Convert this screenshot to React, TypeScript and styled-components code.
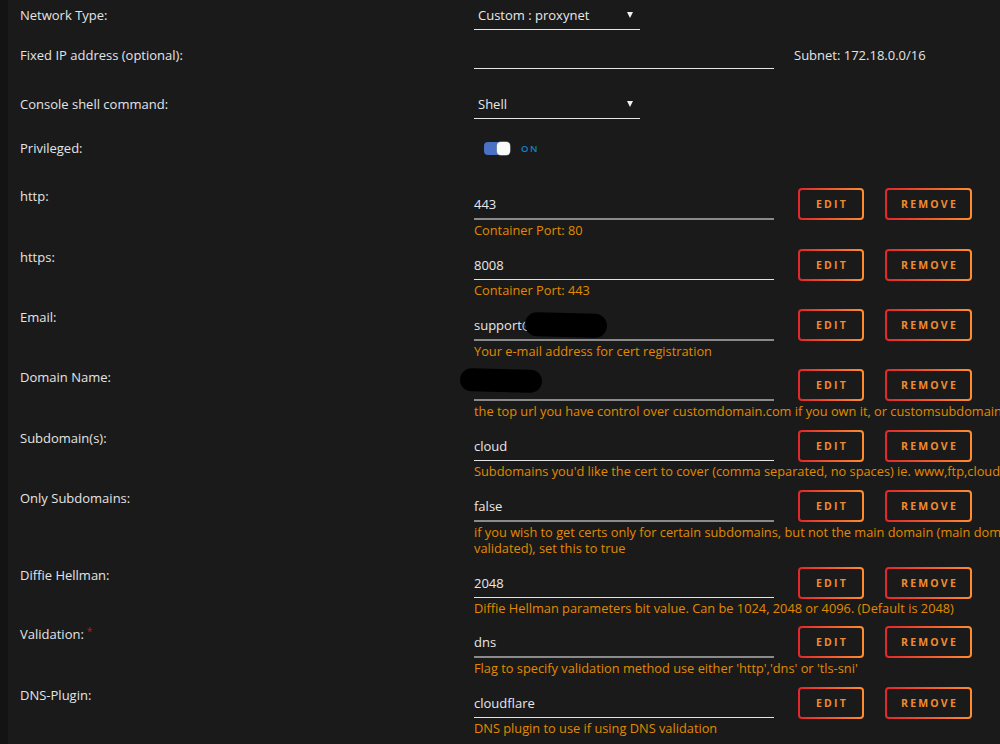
import React from "react";
import styled, { createGlobalStyle } from "styled-components";

const Global = createGlobalStyle`
  html, body { margin: 0; padding: 0; background: #1a1a1a; overflow: hidden; }
  body { font-family: "Open Sans", "Noto Sans", sans-serif; -webkit-font-smoothing: antialiased; }
  * { box-sizing: border-box; }
`;

const Page = styled.div`
  display: flex;
  width: 1000px;
  height: 744px;
  overflow: hidden;
`;

const Strip = styled.div`
  width: 8px;
  flex: none;
  background: #131313;
`;

const Content = styled.div`
  flex: 1;
  min-width: 0;
  padding-left: 12px;
  background: #1a1a1a;
`;

const TopRow = styled.div<{ $top: number; $h: number }>`
  display: grid;
  grid-template-columns: 454px 300px auto;
  align-items: center;
  margin-top: ${(p) => p.$top}px;
  height: ${(p) => p.$h}px;
`;

const PortRow = styled.div<{ $first?: boolean }>`
  display: grid;
  grid-template-columns: 454px 300px auto;
  align-items: start;
  margin-top: ${(p) => (p.$first ? 28 : 0)}px;
  padding-bottom: 8.75px;
`;

const Label = styled.div`
  font-size: 13px;
  line-height: 20px;
  height: 20px;
  color: #e4e4e4;
  white-space: nowrap;
`;

const Req = styled.span`
  position: relative;
  top: -4px;
  color: #d01010;
  font-size: 10px;
  margin-left: 3px;
`;

const Select = styled.div<{ $h: number }>`
  width: 166px;
  height: ${(p) => p.$h}px;
  display: flex;
  align-items: center;
  justify-content: space-between;
  padding: 0 7px 0 4px;
  border-bottom: 1px solid #e6e6e6;
  font-size: 13px;
  color: #e8e8e8;
`;

const Arrow = styled.span`
  width: 0;
  height: 0;
  border-left: 3px solid transparent;
  border-right: 3px solid transparent;
  border-top: 6px solid #f0f0f0;
`;

const PlainInput = styled.div<{ $h: number }>`
  width: 300px;
  height: ${(p) => p.$h}px;
  border-bottom: 1px solid #e6e6e6;
`;

const Subnet = styled.div`
  margin-left: 20px;
  font-size: 13px;
  color: #e4e4e4;
  white-space: nowrap;
`;

const Toggle = styled.div`
  display: flex;
  align-items: center;
  margin-left: 10px;
`;

const Track = styled.div`
  width: 26px;
  height: 13px;
  border-radius: 4px;
  background: #4b71c4;
  display: flex;
  justify-content: flex-end;
`;

const Knob = styled.div`
  width: 13px;
  height: 13px;
  border-radius: 4px;
  background: #fafafa;
  box-shadow: 0 0 0 0.5px #999;
`;

const OnText = styled.span`
  margin-left: 11px;
  font-size: 9.5px;
  font-weight: 600;
  letter-spacing: 1.6px;
  color: #0f84c6;
`;

const FieldCol = styled.div`
  margin-top: 2px;
  min-width: 0;
`;

const InputBox = styled.div<{ $active?: boolean }>`
  position: relative;
  width: 300px;
  height: ${(p) => (p.$active ? 31 : 32)}px;
  margin-bottom: ${(p) => (p.$active ? 1 : 0)}px;
  padding-top: 2px;
  line-height: 28px;
  font-size: 13px;
  color: #e8e8e8;
  border-bottom: ${(p) => (p.$active ? "1px solid #e4e4e4" : "2px solid #8a8a8a")};
`;

const Blob = styled.span<{ $l: number; $t: number; $w: number; $h: number }>`
  position: absolute;
  left: ${(p) => p.$l}px;
  top: ${(p) => p.$t}px;
  width: ${(p) => p.$w}px;
  height: ${(p) => p.$h}px;
  border-radius: 12px;
  background: #000;
  transform: rotate(1.5deg);
`;

const Help = styled.div`
  margin-top: 2px;
  font-size: 12.8px;
  line-height: 16px;
  color: #e08a00;
  white-space: nowrap;
`;

const Buttons = styled.div`
  display: flex;
  gap: 21px;
  margin-top: 2px;
  margin-left: 24px;
`;

const Btn = styled.button<{ $w: number }>`
  width: ${(p) => p.$w}px;
  height: 32px;
  border: 2px solid transparent;
  border-radius: 4px;
  background: linear-gradient(#1a1a1a, #1a1a1a) padding-box,
    linear-gradient(90deg, #e3262b, #ff8d2f) border-box;
  color: #f08a30;
  font-family: "Open Sans", "Noto Sans", sans-serif;
  font-size: 10.5px;
  font-weight: 700;
  letter-spacing: 2.2px;
  padding: 0 0 0 2px;
  cursor: pointer;
`;

type Field = {
  label: string;
  value?: string;
  help: React.ReactNode;
  active?: boolean;
  required?: boolean;
  blob?: { l: number; t: number; w: number; h: number };
};

const fields: Field[] = [
  { label: "http:", value: "443", help: "Container Port: 80" },
  { label: "https:", value: "8008", help: "Container Port: 443", active: true },
  {
    label: "Email:",
    value: "support@",
    help: "Your e-mail address for cert registration",
    blob: { l: 51, t: 4, w: 82, h: 24 },
  },
  {
    label: "Domain Name:",
    value: "",
    help: "the top url you have control over customdomain.com if you own it, or customsubdomain.duckdns.org if using duckdns",
    blob: { l: -14, t: 0, w: 82, h: 23 },
  },
  {
    label: "Subdomain(s):",
    value: "cloud",
    help: "Subdomains you'd like the cert to cover (comma separated, no spaces) ie. www,ftp,cloud, For a wildcard cert, set this exactly to wildcard",
    active: true,
  },
  {
    label: "Only Subdomains:",
    value: "false",
    help: (
      <>
        if you wish to get certs only for certain subdomains, but not the main domain (main domain may be hosted on another machine and cannot be
        <br />
        validated), set this to true
      </>
    ),
  },
  {
    label: "Diffie Hellman:",
    value: "2048",
    help: "Diffie Hellman parameters bit value. Can be 1024, 2048 or 4096. (Default is 2048)",
    active: true,
  },
  {
    label: "Validation:",
    value: "dns",
    help: "Flag to specify validation method use either 'http','dns' or 'tls-sni'",
    required: true,
  },
  {
    label: "DNS-Plugin:",
    value: "cloudflare",
    help: "DNS plugin to use if using DNS validation",
    active: true,
  },
];

export default function App() {
  return (
    <>
      <Global />
      <Page>
        <Strip />
        <Content>
          <TopRow $top={0} $h={30}>
            <Label>Network Type:</Label>
            <Select $h={30}>
              <span>Custom : proxynet</span>
              <Arrow />
            </Select>
          </TopRow>
          <TopRow $top={10} $h={29}>
            <Label>Fixed IP address (optional):</Label>
            <PlainInput $h={29} />
            <Subnet>Subnet: 172.18.0.0/16</Subnet>
          </TopRow>
          <TopRow $top={20} $h={30}>
            <Label>Console shell command:</Label>
            <Select $h={30}>
              <span>Shell</span>
              <Arrow />
            </Select>
          </TopRow>
          <TopRow $top={19} $h={20}>
            <Label>Privileged:</Label>
            <Toggle>
              <Track>
                <Knob />
              </Track>
              <OnText>ON</OnText>
            </Toggle>
          </TopRow>
          {fields.map((f, i) => (
            <PortRow key={f.label} $first={i === 0}>
              <Label>
                {f.label}
                {f.required && <Req>*</Req>}
              </Label>
              <FieldCol>
                <InputBox $active={f.active}>
                  {f.value}
                  {f.blob && <Blob $l={f.blob.l} $t={f.blob.t} $w={f.blob.w} $h={f.blob.h} />}
                </InputBox>
                <Help>{f.help}</Help>
              </FieldCol>
              <Buttons>
                <Btn $w={66}>EDIT</Btn>
                <Btn $w={87}>REMOVE</Btn>
              </Buttons>
            </PortRow>
          ))}
        </Content>
      </Page>
    </>
  );
}
